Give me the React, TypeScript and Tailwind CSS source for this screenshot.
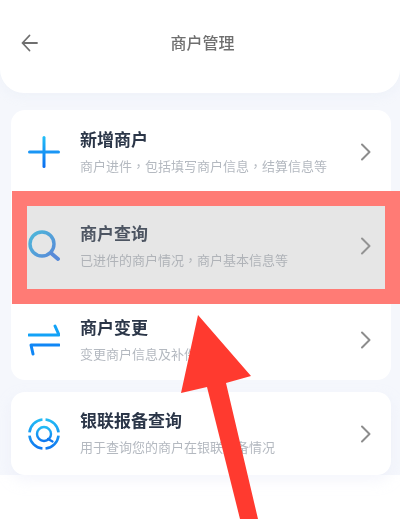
import React from "react";

const PlusIcon = () => (
  <svg width="32" height="34" viewBox="0 0 32 34" fill="none">
    <defs>
      <linearGradient id="plusV" x1="0" y1="0" x2="0" y2="1">
        <stop offset="0" stopColor="#22c0f7" />
        <stop offset="1" stopColor="#0a6cf0" />
      </linearGradient>
    </defs>
    <path d="M1.5 17H30.5" stroke="#1a96f5" strokeWidth="3" strokeLinecap="round" />
    <rect x="14.5" y="1" width="3" height="32" rx="1.5" fill="url(#plusV)" />
  </svg>
);

const SearchIcon = () => (
  <svg width="32" height="32" viewBox="0 0 32 32" fill="none">
    <defs>
      <linearGradient id="searchG" x1="0" y1="0" x2="1" y2="1">
        <stop offset="0" stopColor="#2cc0ef" />
        <stop offset="1" stopColor="#3a80ec" />
      </linearGradient>
    </defs>
    <circle cx="14" cy="14" r="12" stroke="url(#searchG)" strokeWidth="3.4" />
    <path d="M23.5 23.5L30 29" stroke="#3a80ec" strokeWidth="3.8" strokeLinecap="round" />
  </svg>
);

const SwapIcon = () => (
  <svg width="32" height="32" viewBox="0 0 32 32" fill="none" strokeLinecap="round" strokeLinejoin="round" strokeWidth="3">
    <path d="M27 2L31 11H1" stroke="#12a2f7" />
    <path d="M31 21H3L5 30" stroke="#0f86f5" />
  </svg>
);

const RadarIcon = () => (
  <svg width="32" height="32" viewBox="0 0 32 32" fill="none">
    <defs>
      <linearGradient id="radarG" x1="0" y1="0" x2="0" y2="1">
        <stop offset="0" stopColor="#22baf5" />
        <stop offset="1" stopColor="#0f78f0" />
      </linearGradient>
    </defs>
    <circle cx="16" cy="16" r="14.6" stroke="url(#radarG)" strokeWidth="2.6" pathLength={100} strokeDasharray="21.5 3.5" strokeDashoffset="-1.75" />
    <circle cx="16" cy="16" r="7" stroke="url(#radarG)" strokeWidth="2.4" />
    <path d="M20 21L24.5 23.5" stroke="#0f78f0" strokeWidth="2.4" strokeLinecap="round" />
  </svg>
);

const Chevron = () => (
  <svg width="11" height="18" viewBox="0 0 11 18" fill="none">
    <path d="M2 1.5L9.5 9L2 16.5" stroke="#8d8d8d" strokeWidth="2" strokeLinecap="round" strokeLinejoin="round" />
  </svg>
);

// the comma sits in the middle of its square in the picture, as in the TC cut
const Comma = () => <span className="font-['Noto_Sans_CJK_TC']">{"\uFF0C"}</span>;

const Row = ({ icon, title, desc }: { icon: React.ReactNode; title: string; desc: React.ReactNode }) => (
  <div className="flex h-[80px] items-center pl-[17px] pr-[20px]">
    <div className="flex w-[32px] shrink-0 justify-center">{icon}</div>
    <div className="ml-[20px] flex-1 -translate-y-[1px]">
      <div className="text-[17px] leading-[24px] font-bold text-[#2b3648]">{title}</div>
      <div className="mt-[5px] text-[13px] leading-[20px] text-[#b4b9c0]">{desc}</div>
    </div>
    <Chevron />
  </div>
);

export default function App() {
  return (
    <div className="relative h-[519px] w-[400px] overflow-hidden bg-white font-['Noto_Sans_CJK_SC','Noto_Sans',sans-serif]">
      <div className="h-[475px] bg-[#f5f7fc] blur-[0.3px]">
        <header className="flex h-[93px] items-start rounded-b-[24px] bg-white pl-[21px] pr-[33px] pt-[32px] shadow-[0_4px_10px_rgba(225,230,245,0.25)]">
          <svg width="17" height="20" viewBox="0 0 17 20" fill="none" className="mt-[1px] shrink-0">
            <path d="M8.5 2.5L1.5 10L8.5 17.5M1.5 10H16" stroke="#6f6f6f" strokeWidth="1.8" strokeLinecap="round" strokeLinejoin="round" />
          </svg>
          <h1 className="flex-1 text-center text-[16px] leading-[20px] font-medium text-[#6f6f6f]">商户管理</h1>
        </header>

        <main className="ml-[11px] mr-[9px] mt-[17px] flex flex-col gap-[12px]">
          <div className="flex h-[270px] flex-col gap-[14px] rounded-[14px] bg-white pt-[2px]">
            <Row icon={<PlusIcon />} title="新增商户" desc={<>商户进件<Comma />包括填写商户信息<Comma />结算信息等</>} />
            <Row icon={<SearchIcon />} title="商户查询" desc={<>已进件的商户情况<Comma />商户基本信息等</>} />
            <Row icon={<SwapIcon />} title="商户变更" desc="变更商户信息及补件" />
          </div>
          <div className="flex h-[83px] items-center rounded-[14px] bg-white shadow-[0_6px_14px_rgba(225,230,245,0.35)]">
            <div className="flex-1">
              <Row icon={<RadarIcon />} title="银联报备查询" desc="用于查询您的商户在银联报备情况" />
            </div>
          </div>
        </main>
      </div>

      {/* red highlight box on top of the second row */}
      <div className="absolute left-[12px] top-[191px] h-[113px] w-[388px] border-[15px] border-[#ff7b75] bg-[#a5a5a5]/[0.28]" />

      {/* red arrow */}
      <svg width="400" height="519" viewBox="0 0 400 519" className="pointer-events-none absolute left-0 top-0">
        <path d="M198 315L251 376L226 383L258 519H240L207 387L181 393Z" fill="#ff3a2f" />
      </svg>
    </div>
  );
}
